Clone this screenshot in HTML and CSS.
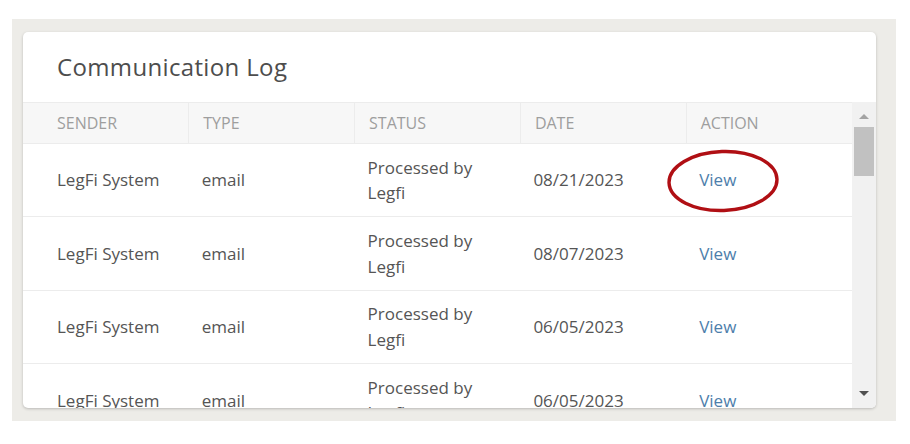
FILE: index.html
```html
<!DOCTYPE html>
<html lang="en">
<head>
<meta charset="utf-8">
<title>Communication Log</title>
<link rel="stylesheet" href="styles.css">
</head>
<body>
<div class="frame">
  <section class="card">
    <h2 class="card-title">Communication Log</h2>
    <div class="scroll-area">
      <div class="table-wrap">
        <table class="log">
          <thead>
            <tr>
              <th class="first">Sender</th>
              <th>Type</th>
              <th>Status</th>
              <th>Date</th>
              <th>Action</th>
            </tr>
          </thead>
          <tbody>
            <tr>
              <td class="first">LegFi System</td>
              <td>email</td>
              <td>Processed by<br>Legfi</td>
              <td>08/21/2023</td>
              <td class="action"><a href="#" class="view">View</a>
                <svg class="circle" width="116" height="66" viewBox="0 0 116 66" aria-hidden="true">
                  <ellipse cx="58" cy="33" rx="54" ry="29.5" fill="none" stroke="#b00f14" stroke-width="3.4" transform="rotate(-2 58 33)"/>
                </svg>
              </td>
            </tr>
            <tr>
              <td class="first">LegFi System</td>
              <td>email</td>
              <td>Processed by<br>Legfi</td>
              <td>08/07/2023</td>
              <td class="action"><a href="#" class="view">View</a></td>
            </tr>
            <tr>
              <td class="first">LegFi System</td>
              <td>email</td>
              <td>Processed by<br>Legfi</td>
              <td>06/05/2023</td>
              <td class="action"><a href="#" class="view">View</a></td>
            </tr>
            <tr>
              <td class="first">LegFi System</td>
              <td>email</td>
              <td>Processed by<br>Legfi</td>
              <td>06/05/2023</td>
              <td class="action"><a href="#" class="view">View</a></td>
            </tr>
          </tbody>
        </table>
      </div>
      <div class="scrollbar" aria-hidden="true">
        <span class="arrow up"></span>
        <div class="track"><span class="thumb"></span></div>
        <span class="arrow down"></span>
      </div>
    </div>
  </section>
</div>
</body>
</html>
```
FILE: styles.css
```css
* { box-sizing: border-box; }

html, body {
  margin: 0;
  padding: 0;
  background: #ffffff;
}

body {
  font-family: "Open Sans", "Liberation Sans", sans-serif;
  color: #555555;
}

.frame {
  margin: 19px 14px 0 12px;
  width: 884px;
  height: 402px;
  background: #edece8;
  padding: 13px 20px 13px 11px;
}

.card {
  background: #ffffff;
  border-radius: 5px;
  box-shadow: 0 1px 3px rgba(0, 0, 0, 0.22);
  height: 376px;
  overflow: hidden;
  display: flex;
  flex-direction: column;
}

.card-title {
  margin: 0;
  padding: 18px 34px 19px;
  font-family: "Open Sans", "Liberation Sans", sans-serif;
  font-size: 24px;
  font-weight: 500;
  line-height: 33px;
  color: #4d4d4d;
  letter-spacing: 0.35px;
}

.scroll-area {
  flex: 1;
  display: flex;
  min-height: 0;
}

.table-wrap {
  flex: 1;
  overflow: hidden;
}

.log {
  width: 100%;
  border-collapse: collapse;
  table-layout: fixed;
}

.log th {
  background: #f7f7f7;
  border-top: 1px solid #ececec;
  border-bottom: 1px solid #ececec;
  border-left: 1px solid #ececec;
  text-align: left;
  font-weight: 400;
  font-size: 16px;
  line-height: 24px;
  padding: 8px 14px;
  color: #9e9e9e;
  text-transform: uppercase;
}

.log th.first { border-left: none; }

.log td {
  font-size: 17px;
  line-height: 25.5px;
  padding: 10.7px 13px;
  border-bottom: 1px solid #ececec;
  color: #555555;
  vertical-align: middle;
}

.log .first { padding-left: 34px; }

.action { position: relative; }

.view {
  color: #4d7eab;
  text-decoration: none;
}

.circle {
  position: absolute;
  left: -21px;
  top: 4px;
}

.scrollbar {
  width: 24px;
  background: #f1f1f1;
  display: flex;
  flex-direction: column;
  align-items: center;
}

.arrow {
  width: 0;
  height: 0;
  border-left: 5px solid transparent;
  border-right: 5px solid transparent;
  flex: none;
}

.arrow.up {
  margin: 12px 0 8px;
  border-bottom: 5px solid #a3a3a3;
}

.arrow.down {
  margin: 7px 0 12px;
  border-top: 5px solid #505050;
}

.track {
  flex: 1;
  width: 100%;
  padding: 0 2px;
}

.thumb {
  display: block;
  height: 49px;
  background: #c1c1c1;
}
```
